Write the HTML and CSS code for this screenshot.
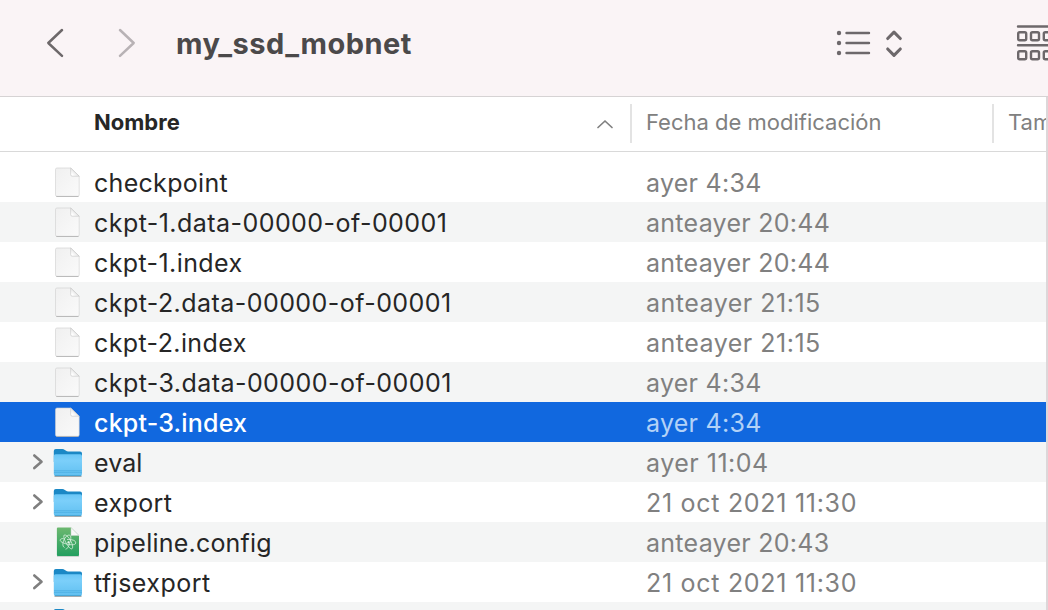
FILE: index.html
```
<!DOCTYPE html>
<html lang="es">
<head>
<meta charset="utf-8">
<title>my_ssd_mobnet</title>
<link rel="stylesheet" href="styles.css">
</head>
<body>
<svg class="defs" width="0" height="0" aria-hidden="true">
  <defs>
    <linearGradient id="paper" x1="0" y1="0" x2="1" y2="1"><stop offset="0" stop-color="#f0f0f0"/><stop offset="1" stop-color="#fafafa"/></linearGradient>
    <linearGradient id="fold" x1="0" y1="1" x2="1" y2="0"><stop offset="0.2" stop-color="#fff"/><stop offset="0.6" stop-color="#e2e2e2"/></linearGradient>
    <linearGradient id="blue" x1="0" y1="0" x2="0" y2="1"><stop offset="0" stop-color="#69c6f6"/><stop offset="0.3" stop-color="#7bcffa"/><stop offset="1" stop-color="#60bff0"/></linearGradient>
    <linearGradient id="green" x1="0" y1="0" x2="0" y2="1"><stop offset="0" stop-color="#6cb86f"/><stop offset="1" stop-color="#239f60"/></linearGradient>
    <symbol id="file" viewBox="0 0 32 40">
      <path d="M5 6h13.700l8.500 8.200V32.800q0 1.500-1.500 1.500H5q-1.500 0-1.500-1.500V7.500Q3.500 6 5 6z" fill="url(#paper)" stroke="#cfcfcf" stroke-width=".6"/>
      <path d="M4.300 34.500h22.200" stroke="#b5b5b5" stroke-width=".9"/>
      <path d="M18.700 6v6.700q0 1.500 1.500 1.500h7z" fill="url(#fold)" stroke="#c2c2c2" stroke-width=".6"/>
    </symbol>
    <symbol id="folder" viewBox="0 0 32 40">
      <path d="M2.500 33.800h27v1.200h-27z" fill="#6b747a" opacity=".6"/>
      <path d="M1.800 9q0-2 2-2h6.500q1.500 0 2.500 1l1.300.800q.7.700 2 .7H28q2 0 2 2V20H1.800z" fill="#1b88c5"/>
      <path d="M1.800 14q0-1.800 1.800-1.800h24.600Q30 12.200 30 14v18q0 2-2 2H3.800q-2 0-2-2z" fill="url(#blue)"/>
      <path d="M2 28.700h27.800M2 30.400h27.800" stroke="#4dafe2" stroke-width=".8"/>
      <path d="M2.800 33.500h26.400" stroke="#429fce" stroke-width=".8"/>
    </symbol>
    <symbol id="config" viewBox="0 0 32 40">
      <path d="M5 33.700h22v.8H5z" fill="#83998c" opacity=".7"/>
      <path d="M5.900 5.500H19l8 8V33q0 1-1 1H5.900q-1 0-1-1V6.500q0-1 1-1z" fill="url(#green)"/>
      <path d="M19 5.500v8h8z" fill="#f8f8f8" stroke="#c8d3ca" stroke-width=".5"/>
      <g fill="none" stroke="#e1f3e5" stroke-width=".75" transform="translate(16 20)">
        <path d="M-4.500-3.500C-9-3.500-9-.5-4 1.200S7.500 3.800 7.700 1 4-2.500-1-2.500M-3.500 5.500c-2.500-1-2-6 .5-9.500s5.500-4 5.800-1S.5 7.500-2.500 7.200M-3.800-7C-1-8 3.800-.5 4.500 3.500S3.200 8 .5 4.500s-5.800-9-4.300-11.500"/>
        <circle cx=".5" cy=".3" r=".8" fill="#fff"/>
      </g>
    </symbol>
    <symbol id="open" viewBox="0 0 14 18"><path d="M3.300 2.500 10.500 8.800 3.300 15.100" fill="none" stroke="#7f7f7f" stroke-width="2.600" stroke-linecap="round" stroke-linejoin="round"/></symbol>
  </defs>
</svg>
<div class="window">
  <header class="toolbar">
    <svg class="nav" width="160" height="96" viewBox="0 0 160 96" fill="none" stroke-width="2.500" stroke-linecap="round" stroke-linejoin="round">
      <path d="M62 30 48.300 43 62 55.800" stroke="#6d686a"/><path d="M120 30l13.700 13L120 55.800" stroke="#b8b2b5"/>
    </svg>
    <h1 class="title">my_ssd_mobnet</h1>
    <svg class="tools" width="228" height="96" viewBox="820 0 228 96" fill="none" stroke="#6d686b" stroke-width="2.400" stroke-linecap="round" stroke-linejoin="round">
      <path d="M846.500 33h22.500M846.500 43h22.500M846.500 53h22.500"/>
      <g fill="#6d686b" stroke="none"><circle cx="839" cy="33" r="2.200"/><circle cx="839" cy="43" r="2.200"/><circle cx="839" cy="53" r="2.200"/></g>
      <path d="M887.700 38.500 894 32.200l6.300 6.300M887.700 49l6.300 6.300 6.300-6.300" stroke-width="3.100"/>
      <path d="M1018 26.500h32M1018 45.200h32"/>
      <g><rect x="1018.200" y="32.200" width="8" height="8" rx="1.500"/><rect x="1031" y="32.200" width="8" height="8" rx="1.500"/><rect x="1043.800" y="32.200" width="8" height="8" rx="1.500"/><rect x="1018.200" y="51.200" width="8" height="8" rx="1.500"/><rect x="1031" y="51.200" width="8" height="8" rx="1.500"/><rect x="1043.800" y="51.200" width="8" height="8" rx="1.500"/></g>
    </svg>
  </header>
  <main class="listing">
    <div class="columns">
      <div class="column name-column"><span class="label-name">Nombre</span><svg width="18" height="12" viewBox="0 0 18 12"><path d="M2 9.500 9 3l7 6.500" fill="none" stroke="#808080" stroke-width="1.700" stroke-linecap="round" stroke-linejoin="round"/></svg></div>
      <div class="column date-column">Fecha de modificación</div>
      <div class="column size-column">Tam</div>
    </div>
    <div class="rows">
      <div class="row"><span class="arrow"></span><svg class="icon"><use href="#file"/></svg><span class="name">checkpoint</span><span class="date">ayer 4:34</span></div>
      <div class="row"><span class="arrow"></span><svg class="icon"><use href="#file"/></svg><span class="name data">ckpt-1.data-00000-of-00001</span><span class="date">anteayer 20:44</span></div>
      <div class="row"><span class="arrow"></span><svg class="icon"><use href="#file"/></svg><span class="name index">ckpt-1.index</span><span class="date">anteayer 20:44</span></div>
      <div class="row"><span class="arrow"></span><svg class="icon"><use href="#file"/></svg><span class="name data">ckpt-2.data-00000-of-00001</span><span class="date wide">anteayer 21:15</span></div>
      <div class="row"><span class="arrow"></span><svg class="icon"><use href="#file"/></svg><span class="name index">ckpt-2.index</span><span class="date wide">anteayer 21:15</span></div>
      <div class="row"><span class="arrow"></span><svg class="icon"><use href="#file"/></svg><span class="name data">ckpt-3.data-00000-of-00001</span><span class="date">ayer 4:34</span></div>
      <div class="row selected"><span class="arrow"></span><svg class="icon"><use href="#file"/></svg><span class="name index">ckpt-3.index</span><span class="date">ayer 4:34</span></div>
      <div class="row"><svg class="arrow"><use href="#open"/></svg><svg class="icon"><use href="#folder"/></svg><span class="name folder">eval</span><span class="date wide">ayer 11:04</span></div>
      <div class="row"><svg class="arrow"><use href="#open"/></svg><svg class="icon"><use href="#folder"/></svg><span class="name index">export</span><span class="date full">21 oct 2021 11:30</span></div>
      <div class="row"><span class="arrow"></span><svg class="icon"><use href="#config"/></svg><span class="name config">pipeline.config</span><span class="date">anteayer 20:43</span></div>
      <div class="row"><svg class="arrow"><use href="#open"/></svg><svg class="icon"><use href="#folder"/></svg><span class="name data">tfjsexport</span><span class="date full">21 oct 2021 11:30</span></div>
      <div class="row"><span class="arrow"></span><svg class="icon"><use href="#folder"/></svg></div>
    </div>
  </main>
</div>
</body>
</html>
```
FILE: styles.css
```
* { box-sizing: border-box; }
body { margin: 0; font-family: Inter, "Liberation Sans", sans-serif; background: #fff; }
.defs { display: block; height: 0; }
.window { width: 1048px; height: 610px; overflow: hidden; }
.toolbar { height: 97px; display: flex; background: #faf4f6; border-bottom: 1px solid #d6d3d4; }
.nav, .tools { flex: none; }
.title { margin: 0 0 0 16px; flex: 1; height: 87px; line-height: 87px; font-size: 29px; font-weight: 700; letter-spacing: .5px; color: #4b494a; white-space: nowrap; }
.listing { height: 513px; border-right: 2px solid #ddd7d9; overflow: hidden; }
.columns { height: 55px; display: flex; padding-top: 7px; border-bottom: 1px solid #d9d9d9; font-size: 22px; line-height: 37px; color: #808080; }
.column { height: 39px; flex: none; white-space: nowrap; overflow: hidden; }
.name-column { width: 632px; padding: 0 16px 0 94px; display: flex; align-items: center; justify-content: space-between; border-right: 2px solid #e3e3e3; }
.label-name { height: 39px; font-weight: 700; color: #262626; }
.date-column { width: 362px; padding-left: 14px; border-right: 2px solid #e3e3e3; }
.size-column { flex: 1; padding-left: 14px; }
.rows { padding-top: 10px; }
.row { height: 40px; display: flex; line-height: 42px; font-size: 25px; color: #262626; white-space: nowrap; }
.row:nth-child(even) { background: #f4f5f5; }
.arrow { width: 14px; height: 18px; margin: 11px 7px 0 31px; flex: none; }
.icon { width: 32px; height: 40px; flex: none; }
.name { width: 552px; margin-left: 10px; flex: none; letter-spacing: .3px; }
.name.data { letter-spacing: .45px; }
.name.index { letter-spacing: .4px; }
.name.config { letter-spacing: .22px; }
.name.folder { letter-spacing: .1px; }
.date { color: #808080; letter-spacing: .27px; }
.date.wide { letter-spacing: .5px; }
.date.full { letter-spacing: .71px; }
.row.selected { background: #1168df; color: #fff; }
.selected .name { font-weight: 500; letter-spacing: .2px; }
.selected .date { color: #b3d2f7; }
```
